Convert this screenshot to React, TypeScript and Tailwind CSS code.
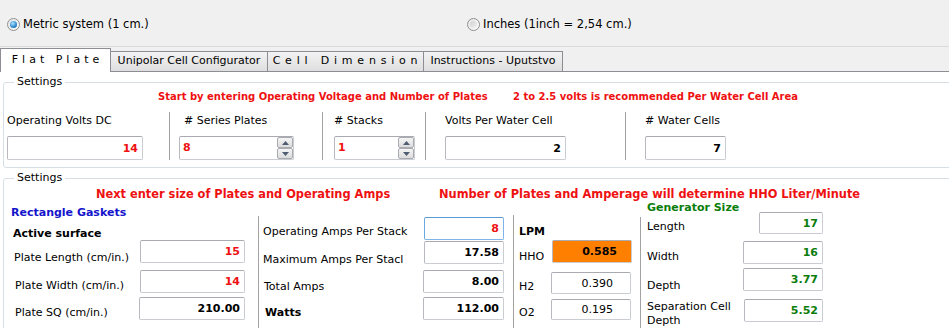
import React from "react";

const RED = "text-[#ee1111]";
const GREEN = "text-[#0b7d0b]";

function Field({
  w,
  h,
  children,
  className = "",
  focused,
  orange,
}: {
  w: string;
  h: string;
  children?: React.ReactNode;
  className?: string;
  focused?: boolean;
  orange?: boolean;
}) {
  const edge = focused
    ? "border-[#7eb4ea] border-t-[#5b9bd8] border-l-[#6aa8e2]"
    : "border-[#c9ccd1] border-t-[#a9abb0] border-l-[#b7b9be]";
  const bg = orange ? "bg-[#ff8000]" : "bg-white";
  return (
    <div
      className={`${w} ${h} shrink-0 flex items-center justify-end border rounded-[2px] text-[11px] leading-none ${edge} ${bg} ${className}`}
    >
      {children}
    </div>
  );
}

function SpinArrow({ up }: { up?: boolean }) {
  return (
    <div className="h-[11px] w-[16px] flex items-center justify-center border border-[#a9abb0] rounded-[2px] bg-gradient-to-b from-[#f5f5f5] to-[#dcdcdc]">
      <svg width="7" height="4" viewBox="0 0 7 4">
        {up ? <polygon points="0,4 7,4 3.5,0" fill="#4f5d73" /> : <polygon points="0,0 7,0 3.5,4" fill="#4f5d73" />}
      </svg>
    </div>
  );
}

function Spin({ w, value }: { w: string; value: string }) {
  return (
    <div className={`${w} h-[24px] flex items-center border border-[#c9ccd1] border-t-[#a9abb0] border-l-[#b7b9be] rounded-[2px] bg-white`}>
      <span className={`flex-1 pl-[3px] font-bold text-[11px] ${RED}`}>{value}</span>
      <div className="flex flex-col">
        <SpinArrow up />
        <SpinArrow />
      </div>
    </div>
  );
}

function Radio({ checked }: { checked?: boolean }) {
  return (
    <div className="w-[13px] h-[13px] rounded-full border border-[#8e8f8f] bg-gradient-to-br from-[#e6e6e6] to-[#fbfbfb] flex items-center justify-center">
      {checked ? (
        <div className="w-[7px] h-[7px] rounded-full bg-[radial-gradient(circle_at_40%_35%,#aee6ff,#2b86cc_60%,#1a5a9a)]" />
      ) : (
        <div className="w-[7px] h-[7px] rounded-full bg-gradient-to-br from-[#cfcfcf] to-[#f3f3f3]" />
      )}
    </div>
  );
}

function Sep({ mt }: { mt: string }) {
  return <div className={`w-px shrink-0 self-start h-[200px] bg-[#a3a3a3] ${mt}`} />;
}

export default function App() {
  return (
    <div className="w-[949px] h-[328px] overflow-hidden bg-white font-['DejaVu_Sans',sans-serif] text-[11px] text-black">
      {/* unit selection */}
      <div className="h-[47px] bg-[#f0f0f0] border-b border-[#dadada] flex items-center pt-[2px]">
        <div className="w-[460px] ml-[7px] flex items-center gap-[3px]">
          <Radio checked />
          <span className="text-[11.5px] leading-[14px]">Metric system (1 cm.)</span>
        </div>
        <div className="flex items-center gap-[3px]">
          <Radio />
          <span className="text-[11.5px] leading-[14px]">Inches (1inch = 2,54 cm.)</span>
        </div>
      </div>

      {/* tabs */}
      <div className="h-[25px] bg-[#f0f0f0] border-b border-[#8c8e94] flex items-end">
        <div className="w-[111px] h-[24px] -mb-px relative z-10 bg-white border-x border-t border-[#8c8e94] flex items-center justify-center tracking-[4px] pl-[4px] text-[11px]">
          Flat Plate
        </div>
        <div className="w-[157px] h-[20px] border-t border-r border-[#8c8e94] bg-gradient-to-b from-[#f3f3f3] to-[#dedede] flex items-center justify-center text-[11px]">
          Unipolar Cell Configurator
        </div>
        <div className="w-[156px] h-[20px] border-t border-r border-[#8c8e94] bg-gradient-to-b from-[#f3f3f3] to-[#dedede] flex items-center justify-center tracking-[4.8px] pl-[4px] text-[11px]">
          Cell Dimension
        </div>
        <div className="w-[139px] h-[20px] border-t border-r border-[#8c8e94] bg-gradient-to-b from-[#f3f3f3] to-[#dedede] flex items-center justify-center text-[11px]">
          Instructions - Uputstvo
        </div>
      </div>

      {/* settings: voltage and plates */}
      <div className="mt-[10px] ml-[3px] w-[960px] h-[86px] border border-[#d5dfe5] rounded-[3px] relative">
        <span className="absolute -top-[8px] left-[10px] px-[3px] bg-white leading-[14px]">Settings</span>
        <div className={`pt-[7px] flex font-bold text-[10px] leading-[13px] ${RED}`}>
          <span className="ml-[154px] w-[355px]">Start by entering Operating Voltage and Number of Plates</span>
          <span>2 to 2.5 volts is recommended Per Water Cell Area</span>
        </div>
        <div className="mt-[9px] flex h-[48px]">
          <div className="ml-[3px] w-[162px]">
            <div className="mt-[2px] leading-[14px]">Operating Volts DC</div>
            <Field w="w-[136px]" h="h-[24px]" className={`mt-[8px] pr-[4px] font-bold ${RED}`}>14</Field>
          </div>
          <div className="w-px bg-[#a3a3a3]" />
          <div className="w-[152px] pl-[9px]">
            <div className="mt-[2px] pl-[5px] leading-[14px]"># Series Plates</div>
            <div className="mt-[8px]">
              <Spin w="w-[115px]" value="8" />
            </div>
          </div>
          <div className="w-px bg-[#a3a3a3]" />
          <div className="w-[102px] pl-[11px]">
            <div className="mt-[2px] leading-[14px]"># Stacks</div>
            <div className="mt-[8px]">
              <Spin w="w-[81px]" value="1" />
            </div>
          </div>
          <div className="w-px bg-[#a3a3a3]" />
          <div className="w-[199px] pl-[19px]">
            <div className="mt-[2px] leading-[14px]">Volts Per Water Cell</div>
            <Field w="w-[121px]" h="h-[24px]" className="mt-[8px] pr-[4px] font-bold">2</Field>
          </div>
          <div className="w-px bg-[#a3a3a3]" />
          <div className="pl-[19px]">
            <div className="mt-[2px] leading-[14px]"># Water Cells</div>
            <Field w="w-[81px]" h="h-[24px]" className="mt-[8px] pr-[4px] font-bold">7</Field>
          </div>
        </div>
      </div>

      {/* settings: plates and amps */}
      <div className="mt-[10px] ml-[3px] w-[960px] h-[200px] border border-[#d5dfe5] rounded-[3px] relative">
        <span className="absolute -top-[8px] left-[10px] px-[3px] bg-white leading-[14px]">Settings</span>
        <div className={`pt-[8px] flex font-bold text-[11.4px] leading-[14px] ${RED}`}>
          <span className="ml-[92px] w-[343px]">Next enter size of Plates and Operating Amps</span>
          <span>Number of Plates and Amperage will determine HHO Liter/Minute</span>
        </div>
        <div className="flex">
          {/* plate size */}
          <div className="w-[254px] shrink-0">
            <div className="mt-[5px] ml-[7px] leading-[14px] font-bold text-[#1414cc]">Rectangle Gaskets</div>
            <div className="mt-[8px] ml-[9px] leading-[12px] font-bold">Active surface</div>
            <div className="flex h-[23px] items-start">
              <div className="w-[136px] pl-[10px] pt-[11px] leading-[14px]">Plate Length (cm/in.)</div>
              <Field w="w-[105px]" h="h-[23px]" className={`pr-[4px] font-bold ${RED}`}>15</Field>
            </div>
            <div className="mt-[7px] flex h-[23px] items-start">
              <div className="w-[136px] pl-[11px] pt-[9px] leading-[14px]">Plate Width (cm/in.)</div>
              <Field w="w-[105px]" h="h-[23px]" className={`pr-[4px] font-bold ${RED}`}>14</Field>
            </div>
            <div className="mt-[4px] flex h-[23px] items-start">
              <div className="w-[135px] pl-[11px] pt-[9px] leading-[14px]">Plate SQ (cm/in.)</div>
              <Field w="w-[106px]" h="h-[23px]" className="pr-[4px] font-bold">210.00</Field>
            </div>
          </div>
          <Sep mt="mt-[15px]" />

          {/* amps */}
          <div className="w-[254px] shrink-0">
            <div className="mt-[16px] flex h-[23px] items-start">
              <div className="w-[165px] pl-[4px] pt-[8px] leading-[14px]">Operating Amps Per Stack</div>
              <Field w="w-[80px]" h="h-[23px]" focused className={`pr-[4px] font-bold ${RED}`}>8</Field>
            </div>
            <div className="mt-[1px] flex h-[23px] items-start">
              <div className="w-[165px] pl-[4px] pt-[12px] leading-[14px] whitespace-nowrap overflow-hidden">Maximum Amps Per Stacl</div>
              <Field w="w-[80px]" h="h-[23px]" className="pr-[4px] font-bold">17.58</Field>
            </div>
            <div className="mt-[6px] flex h-[23px] items-start">
              <div className="w-[164px] pl-[5px] pt-[10px] leading-[14px]">Total Amps</div>
              <Field w="w-[81px]" h="h-[23px]" className="pr-[4px] font-bold">8.00</Field>
            </div>
            <div className="mt-[4px] flex h-[23px] items-start">
              <div className="w-[164px] pl-[6px] pt-[9px] leading-[14px] font-bold">Watts</div>
              <Field w="w-[81px]" h="h-[23px]" className="pr-[4px] font-bold">112.00</Field>
            </div>
          </div>
          <Sep mt="mt-[14px]" />

          {/* LPM */}
          <div className="w-[126px] shrink-0">
            <div className="mt-[24px] pl-[5px] leading-[14px] font-bold">LPM</div>
            <div className="mt-[1px] flex h-[23px] items-start">
              <div className="w-[38px] pl-[5px] pt-[10px] leading-[14px]">HHO</div>
              <Field w="w-[80px]" h="h-[23px]" orange className="pr-[14px] font-bold">0.585</Field>
            </div>
            <div className="mt-[9px] flex h-[22px] items-start">
              <div className="w-[37px] pl-[5px] pt-[8px] leading-[14px]">H2</div>
              <Field w="w-[80px]" h="h-[22px]" className="pr-[17px]">0.390</Field>
            </div>
            <div className="mt-[5px] flex h-[21px] items-start">
              <div className="w-[37px] pl-[5px] pt-[7px] leading-[14px]">O2</div>
              <Field w="w-[80px]" h="h-[21px]" className="pr-[17px]">0.195</Field>
            </div>
          </div>
          <Sep mt="mt-[16px]" />

          {/* generator size */}
          <div className="flex">
            <div className="w-[102px] pl-[6px]">
              <div className={`leading-[14px] font-bold whitespace-nowrap ${GREEN}`}>Generator Size</div>
              <div className="mt-[5px] leading-[14px]">Length</div>
              <div className="mt-[16px] leading-[14px]">Width</div>
              <div className="mt-[15px] leading-[14px]">Depth</div>
              <div className="mt-[7px] leading-[14px] whitespace-nowrap">Separation Cell</div>
              <div className="leading-[13px]">Depth</div>
            </div>
            <div>
              <Field w="w-[64px]" h="h-[22px]" className={`mt-[11px] ml-[16px] pr-[4px] font-bold ${GREEN}`}>17</Field>
              <Field w="w-[80px]" h="h-[23px]" className={`mt-[7px] pr-[4px] font-bold ${GREEN}`}>16</Field>
              <Field w="w-[80px]" h="h-[23px]" className={`mt-[4px] pr-[4px] font-bold ${GREEN}`}>3.77</Field>
              <Field w="w-[79px]" h="h-[23px]" className={`mt-[8px] ml-px pr-[4px] font-bold ${GREEN}`}>5.52</Field>
            </div>
          </div>
        </div>
      </div>
    </div>
  );
}
